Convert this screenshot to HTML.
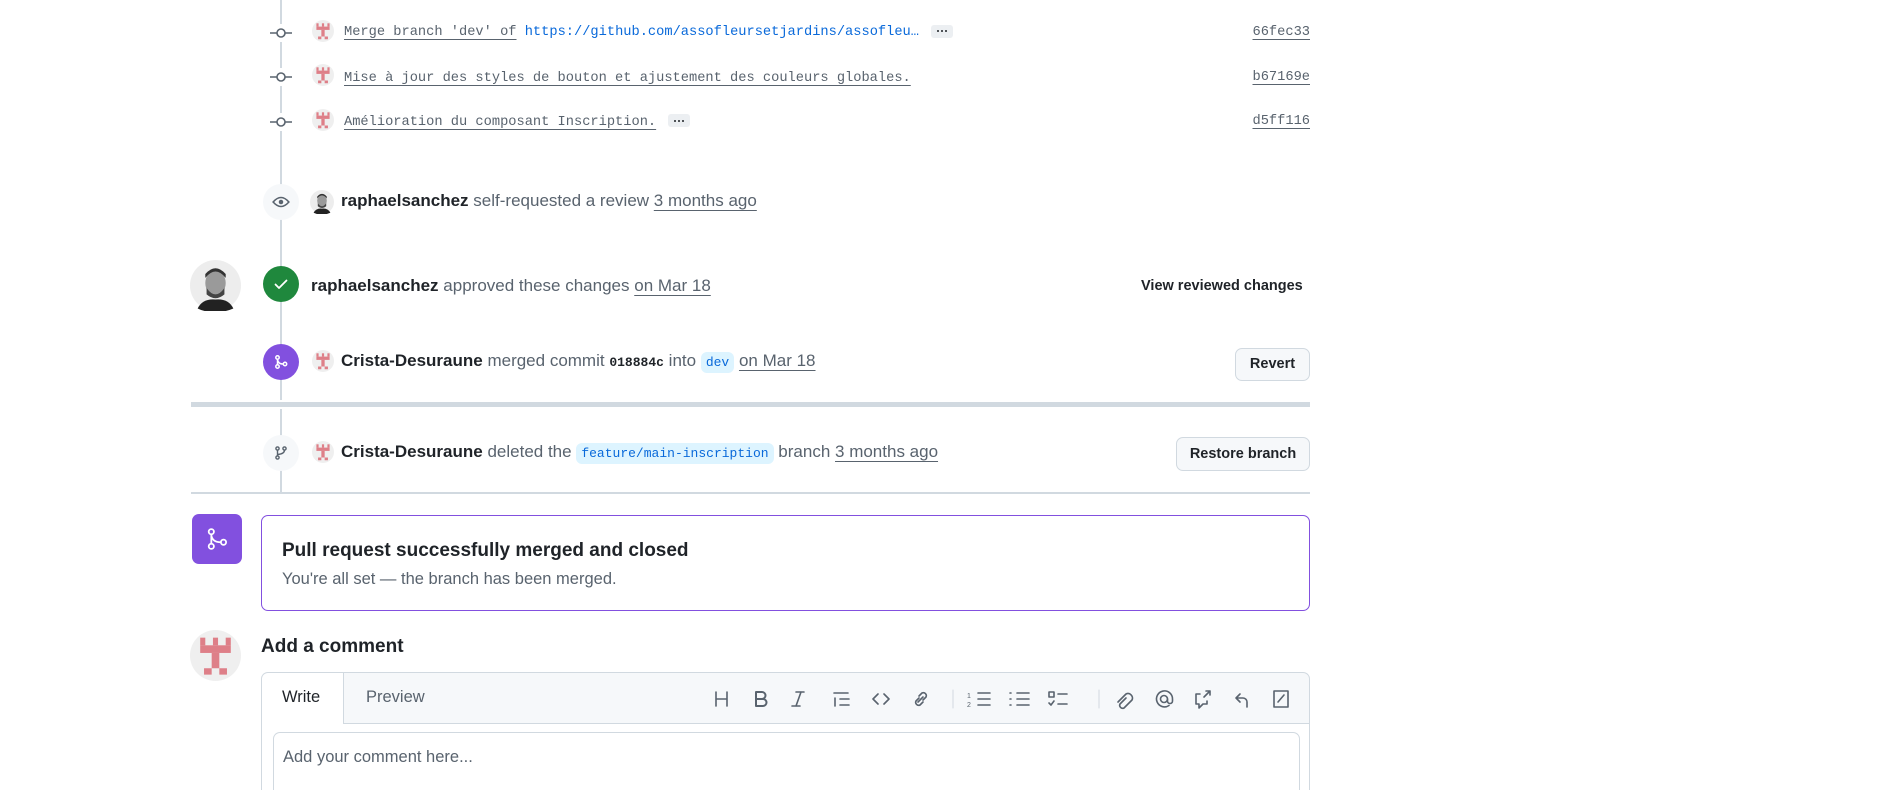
<!DOCTYPE html>
<html><head><meta charset="utf-8">
<style>
*{box-sizing:border-box;margin:0;padding:0}
html{width:1893px;height:790px;overflow:hidden}
body{width:1893px;height:790px;background:#fff;position:relative;overflow:hidden;font-family:"Liberation Sans",sans-serif;color:#1f2328;font-size:17px}
.a{position:absolute}
.mono{font-family:"Liberation Mono",monospace}
.cm{font-size:13.7px;color:#59636e;text-decoration:underline;text-underline-offset:4px;text-decoration-color:#59636e}
.sha{font-size:13.7px;color:#59636e;text-decoration:underline;text-underline-offset:4px;right:583px}
.row{white-space:nowrap;line-height:20px}
.mut{color:#59636e}
.u{text-decoration:underline;text-underline-offset:4px;color:#59636e}
.dots{display:inline-flex;align-items:center;justify-content:center;background:#eceff2;border-radius:3px;width:22px;height:13px;vertical-align:middle;margin-left:12px;gap:2px}
.dots i{display:block;width:2px;height:2px;background:#1f2328;border-radius:1px}
.btn{border:1px solid #d1d9e0;background:#f6f8fa;border-radius:7px;font-size:14.5px;font-weight:600;text-align:center;color:#1f2328}
.badge{border-radius:50%;display:flex;align-items:center;justify-content:center}
.code{background:#ddf4ff;border-radius:6px;padding:3px 5px;font-size:13px;color:#0969da}
.tb{top:688px}
</style></head><body>
<svg width="0" height="0" style="position:absolute">
<defs>
<symbol id="ic" viewBox="0 0 40 40"><circle cx="20" cy="20" r="20" fill="#efefef"/><g fill="#de7f88"><rect x="8" y="6" width="4" height="6"/><rect x="18" y="6" width="4" height="6"/><rect x="28" y="6" width="4" height="6"/><rect x="8" y="12" width="24" height="6"/><rect x="17" y="18" width="6" height="12"/><rect x="11" y="30" width="6" height="5"/><rect x="23" y="30" width="6" height="5"/></g></symbol>
<symbol id="face" viewBox="0 0 40 40"><circle cx="20" cy="20" r="20" fill="#ededed"/><ellipse cx="20" cy="18" rx="8" ry="10" fill="#9a9a9a"/><path d="M12 14 Q20 4 28 14 L28 11 Q20 2 12 11Z" fill="#333"/><path d="M13 22 Q20 32 27 22 L27 27 Q20 33 13 27Z" fill="#444"/><path d="M6 38 Q10 30 20 31 Q30 30 34 38 Q27 41 20 41 Q12 41 6 38Z" fill="#222"/></symbol>
</defs></svg>

<div class="a" style="left:280px;top:0;width:2px;height:400px;background:#d1d9e0"></div>
<div class="a" style="left:280px;top:409px;width:2px;height:84px;background:#d1d9e0"></div>

<div class="a" style="left:268px;top:24px;width:26px;height:18px;background:#fff"><svg width="26" height="18" viewBox="0 0 26 18"><line x1="2" y1="9" x2="24" y2="9" stroke="#59636e" stroke-width="1.6"/><circle cx="13" cy="9" r="4" fill="#fff" stroke="#59636e" stroke-width="1.6"/></svg></div>
<div class="a" style="left:268px;top:68px;width:26px;height:18px;background:#fff"><svg width="26" height="18" viewBox="0 0 26 18"><line x1="2" y1="9" x2="24" y2="9" stroke="#59636e" stroke-width="1.6"/><circle cx="13" cy="9" r="4" fill="#fff" stroke="#59636e" stroke-width="1.6"/></svg></div>
<div class="a" style="left:268px;top:113px;width:26px;height:18px;background:#fff"><svg width="26" height="18" viewBox="0 0 26 18"><line x1="2" y1="9" x2="24" y2="9" stroke="#59636e" stroke-width="1.6"/><circle cx="13" cy="9" r="4" fill="#fff" stroke="#59636e" stroke-width="1.6"/></svg></div>

<svg class="a" style="left:312px;top:20px" width="22" height="22"><use href="#ic"/></svg>
<svg class="a" style="left:312px;top:64px" width="22" height="22"><use href="#ic"/></svg>
<svg class="a" style="left:312px;top:109px" width="22" height="22"><use href="#ic"/></svg>

<div class="a row mono" style="left:344px;top:23px;font-size:13.7px"><span class="cm">Merge branch 'dev' of</span> <span style="color:#0969da">https://github.com/assofleursetjardins/assofleu…</span><span class="dots"><i></i><i></i><i></i></span></div>
<div class="a row mono" style="left:344px;top:68px"><span class="cm">Mise à jour des styles de bouton et ajustement des couleurs globales.</span></div>
<div class="a row mono" style="left:344px;top:112px"><span class="cm">Amélioration du composant Inscription.</span><span class="dots"><i></i><i></i><i></i></span></div>
<div class="a row mono sha" style="top:23px">66fec33</div>
<div class="a row mono sha" style="top:68px">b67169e</div>
<div class="a row mono sha" style="top:112px">d5ff116</div>

<div class="a badge" style="left:263px;top:184px;width:36px;height:36px;background:#f6f8fa"><svg width="18" height="18" viewBox="0 0 16 16"><path d="M1 8 Q8 0 15 8 Q8 16 1 8Z" fill="none" stroke="#59636e" stroke-width="1.4"/><circle cx="8" cy="8" r="2" fill="#59636e"/></svg></div>
<svg class="a" style="left:310px;top:190px" width="24" height="24"><use href="#face"/></svg>
<div class="a row" style="left:341px;top:191px"><b>raphaelsanchez</b> <span class="mut">self-requested a review</span> <span class="u">3 months ago</span></div>

<svg class="a" style="left:190px;top:260px" width="51" height="51"><use href="#face"/></svg>
<div class="a badge" style="left:263px;top:266px;width:36px;height:36px;background:#1f883d"><svg width="16" height="16" viewBox="0 0 16 16"><path d="M2.5 8.5 L6 12 L13.5 4.5" fill="none" stroke="#fff" stroke-width="1.8" stroke-linecap="round" stroke-linejoin="round"/></svg></div>
<div class="a row" style="left:311px;top:276px"><b>raphaelsanchez</b> <span class="mut">approved these changes</span> <span class="u">on Mar 18</span></div>
<div class="a row" style="left:1141px;top:276px;font-size:14.5px;font-weight:600">View reviewed changes</div>

<div class="a badge" style="left:263px;top:344px;width:36px;height:36px;background:#8250df"><svg width="16" height="16" viewBox="0 0 16 16" fill="none" stroke="#fff" stroke-width="1.5"><circle cx="4.5" cy="3.5" r="1.7"/><circle cx="4.5" cy="12.5" r="1.7"/><circle cx="12" cy="10" r="1.7"/><path d="M4.5 5.2 V10.8 M4.5 5.5 Q5 10 10.3 10"/></svg></div>
<svg class="a" style="left:312px;top:350px" width="22" height="22"><use href="#ic"/></svg>
<div class="a row" style="left:341px;top:351px"><b>Crista-Desuraune</b> <span class="mut">merged commit</span> <b class="mono" style="font-size:13px">018884c</b> <span class="mut">into</span> <span class="code mono">dev</span> <span class="u">on Mar 18</span></div>
<div class="a btn" style="left:1235px;top:348px;width:75px;height:33px;line-height:31px">Revert</div>

<div class="a" style="left:191px;top:402px;width:1119px;height:5px;background:#d1d9e0"></div>

<div class="a badge" style="left:263px;top:435px;width:36px;height:36px;background:#f6f8fa"><svg width="16" height="16" viewBox="0 0 16 16" fill="none" stroke="#59636e" stroke-width="1.4"><circle cx="4.5" cy="3.5" r="1.6"/><circle cx="4.5" cy="12.5" r="1.6"/><circle cx="11.5" cy="3.5" r="1.6"/><path d="M4.5 5 V11 M11.5 5 Q11.5 9 4.5 9.5"/></svg></div>
<svg class="a" style="left:312px;top:441px" width="22" height="22"><use href="#ic"/></svg>
<div class="a row" style="left:341px;top:442px"><b>Crista-Desuraune</b> <span class="mut">deleted the</span> <span class="code mono">feature/main-inscription</span> <span class="mut">branch</span> <span class="u">3 months ago</span></div>
<div class="a btn" style="left:1176px;top:437px;width:134px;height:34px;line-height:32px">Restore branch</div>

<div class="a" style="left:191px;top:492px;width:1119px;height:2px;background:#d1d9e0"></div>

<div class="a" style="left:192px;top:514px;width:50px;height:50px;background:#8250df;border-radius:7px;display:flex;align-items:center;justify-content:center"><svg width="26" height="26" viewBox="0 0 16 16" fill="none" stroke="#fff" stroke-width="1.1"><circle cx="4.5" cy="3.5" r="1.6"/><circle cx="4.5" cy="12.5" r="1.6"/><circle cx="12" cy="10" r="1.6"/><path d="M4.5 5.1 V10.9 M4.5 5.5 Q5 10 10.4 10"/></svg></div>
<div class="a" style="left:261px;top:515px;width:1049px;height:96px;border:1.5px solid #8250df;border-radius:7px"></div>
<div class="a row" style="left:282px;top:541px;font-size:19px;font-weight:600">Pull request successfully merged and closed</div>
<div class="a row mut" style="left:282px;top:569px;font-size:16.5px">You're all set — the branch has been merged.</div>

<svg class="a" style="left:190px;top:630px" width="51" height="51"><use href="#ic"/></svg>
<div class="a row" style="left:261px;top:637px;font-size:19px;font-weight:600">Add a comment</div>
<div class="a" style="left:261px;top:672px;width:1049px;height:118px;border:1px solid #d1d9e0;border-bottom:none;border-radius:7px 7px 0 0;background:#f6f8fa;overflow:hidden">
 <div class="a" style="left:0;top:50px;width:1047px;height:67px;background:#fff;border-top:1px solid #d1d9e0"></div>
 <div class="a" style="left:-1px;top:-1px;width:83px;height:52px;background:#fff;border:1px solid #d1d9e0;border-bottom:none;border-radius:7px 0 0 0"></div>
 <div class="a" style="left:20px;top:15px;font-size:16.5px">Write</div>
 <div class="a mut" style="left:104px;top:15px;font-size:16.5px">Preview</div>
 <div class="a" style="left:11px;top:59px;width:1027px;height:59px;border:1px solid #d1d9e0;border-bottom:none;border-radius:7px 7px 0 0;background:#fff"></div>
 <div class="a mut" style="left:21px;top:75px;font-size:16.5px">Add your comment here...</div>
</div>
<svg class="a tb" style="left:706px" width="600" height="22" viewBox="0 0 600 22" fill="none" stroke="#59636e" stroke-width="1.6" stroke-linecap="round" stroke-linejoin="round">
 <path d="M10 4v14M21 4v14M10 11h11"/>
 <path d="M50 4h6a3.5 3.5 0 0 1 0 7h-6zM50 11h7a3.5 3.5 0 0 1 0 7h-7zM50 4v14" stroke-width="2"/>
 <path d="M90 4h8M86 18h8M95 4l-5 14"/>
 <path d="M128 5h14M129 10v8M134 11h9M134 17h9"/>
 <path d="M172 6l-5 5 5 5M178 6l5 5-5 5"/>
 <path d="M213 10l-3 3a3 3 0 0 0 4 4l3-3M217 12l3-3a3 3 0 0 0-4-4l-3 3M212 14l5-5"/>
 <path d="M247 2v18" stroke="#d1d9e0" stroke-width="1"/>
 <path d="M272 5h12M272 11h12M272 17h12"/><text x="261" y="10" font-size="7" fill="#59636e" stroke="none" font-family="Liberation Sans">1</text><text x="261" y="19" font-size="7" fill="#59636e" stroke="none" font-family="Liberation Sans">2</text>
 <path d="M311 5h12M311 11h12M311 17h12M304 5h1M304 11h1M304 17h1"/>
 <path d="M343 4h5v5h-5zM352 6h9M352 16h9M343 15l2 2 3-4"/>
 <path d="M393 2v18" stroke="#d1d9e0" stroke-width="1"/>
 <path d="M420 10l-6 6a3 3 0 0 0 4 4l8-8a4.5 4.5 0 0 0-6-6l-8 8"/>
 <circle cx="458" cy="11" r="3.5"/><path d="M461.5 11v2a2.5 2.5 0 0 0 5 0v-2a8 8 0 1 0-3.5 6.5"/>
 <path d="M494 6h-4v10h3v4l4-4h4v-3M498 9l6-6M500 3h4v4"/>
 <path d="M534 6l-4 4 4 4M530 10h7a4 4 0 0 1 4 4v5"/>
 <path d="M568 3h14v16h-14zM572 14l6-7"/>
</svg>
</body></html>
